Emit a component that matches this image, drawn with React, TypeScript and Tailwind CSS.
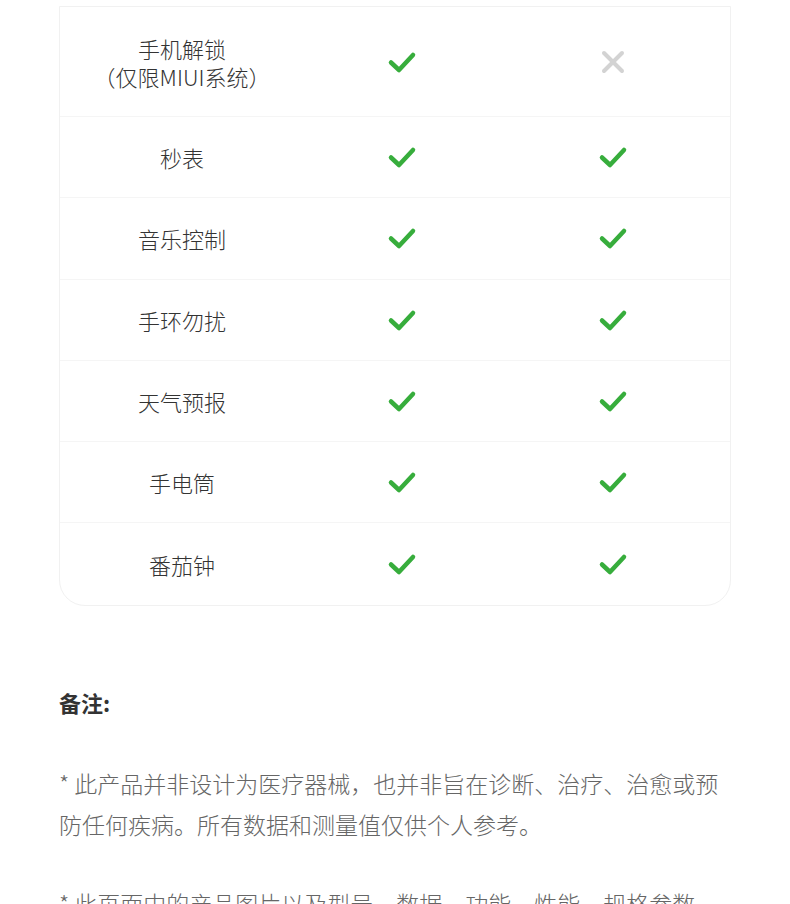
import React from "react";

const Check = () => (
  <svg width="30" height="24" viewBox="0 0 30 24" fill="none">
    <polyline points="4,12.5 12,20 26,5" stroke="#37ad3c" strokeWidth="4.5" strokeLinecap="round" strokeLinejoin="round" />
  </svg>
);

const Cross = () => (
  <svg width="24" height="24" viewBox="0 0 24 24" fill="none">
    <line x1="3" y1="3" x2="21" y2="21" stroke="#d3d3d3" strokeWidth="4" strokeLinecap="round" />
    <line x1="21" y1="3" x2="3" y2="21" stroke="#d3d3d3" strokeWidth="4" strokeLinecap="round" />
  </svg>
);

const rows: { label: string; b: boolean }[] = [
  { label: "秒表", b: true },
  { label: "音乐控制", b: true },
  { label: "手环勿扰", b: true },
  { label: "天气预报", b: true },
  { label: "手电筒", b: true },
  { label: "番茄钟", b: true },
];

export default function App() {
  const font = { fontFamily: '"Noto Sans CJK SC", "Noto Sans", sans-serif' };
  return (
    <div className="w-[790px] h-[904px] overflow-hidden bg-white pt-[6px] px-[59px]" style={font}>
      <div className="w-[672px] border border-[#f1f1f1] rounded-b-[26px] bg-white">
        <div className="grid grid-cols-[244px_196px_226px] h-[110px] items-center border-b border-[#f5f5f5]">
          <div className="flex flex-col items-center text-[22px] leading-[28px] text-[#333] font-light">
            <span>手机解锁</span>
            <span>（仅限MIUI系统）</span>
          </div>
          <div className="flex justify-center"><Check /></div>
          <div className="flex justify-center"><Cross /></div>
        </div>
        {rows.map((r, i) => (
          <div
            key={r.label}
            className={
              i < rows.length - 1
                ? "grid grid-cols-[244px_196px_226px] h-[81.3px] items-center border-b border-[#f5f5f5]"
                : "grid grid-cols-[244px_196px_226px] h-[82px] items-center"
            }
          >
            <div className="text-center text-[22px] leading-[28px] text-[#333] font-light">{r.label}</div>
            <div className="flex justify-center"><Check /></div>
            <div className="flex justify-center">{r.b ? <Check /> : <Cross />}</div>
          </div>
        ))}
      </div>

      <div className="mt-[81px] text-[22px] leading-[30px] font-bold text-[#333]">备注:</div>

      <p className="mt-[46px] text-[23px] leading-[41px] text-[#666] font-light">
        * 此产品并非设计为医疗器械，也并非旨在诊断、治疗、治愈或预防任何疾病。所有数据和测量值仅供个人参考。
      </p>
      <p className="mt-[38px] text-[23px] leading-[41px] text-[#666] font-light">
        * 此页面中的产品图片以及型号、数据、功能、性能、规格参数、用户界面等仅供参考，请以实物为准。
      </p>
    </div>
  );
}
